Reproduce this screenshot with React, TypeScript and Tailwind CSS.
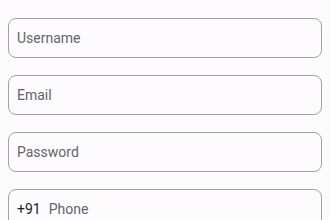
const fields = ['Username', 'Email', 'Password'];

export default function App() {
  return (
    <div className="w-[330px] h-[220px] overflow-hidden bg-[#fdfbfe] px-2 pt-[18px] flex flex-col gap-[17px] font-['Roboto',sans-serif]">
      {fields.map((label) => (
        <div
          key={label}
          className="h-10 shrink-0 rounded-lg border border-[#a3a1a6] flex items-center px-2"
        >
          <span className="text-[14px] text-[#66646b]">{label}</span>
        </div>
      ))}
      <div className="h-10 shrink-0 rounded-lg border border-[#a3a1a6] flex items-center px-2 gap-2">
        <span className="text-[14px] text-[#1c1b1f]">+91</span>
        <span className="text-[14px] text-[#66646b]">Phone</span>
      </div>
    </div>
  );
}
